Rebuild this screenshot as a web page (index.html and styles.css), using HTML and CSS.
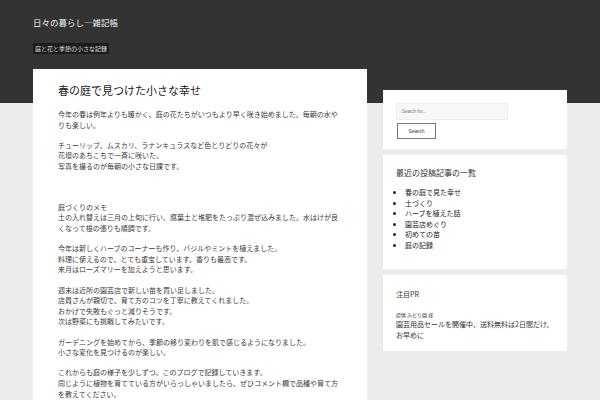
FILE: index.html
```html
<!DOCTYPE html>
<html lang="ja">
<head>
<meta charset="utf-8">
<title>日々の暮らし—雑記帳</title>
<link rel="stylesheet" href="styles.css">
</head>
<body>
<header class="site-header">
  <div class="site-title">日々の暮らし—雑記帳</div>
  <div class="site-tagline">庭と花と季節の小さな記録</div>
</header>
<div class="layout">
  <main class="content">
    <h1 class="entry-title">春の庭で見つけた小さな幸せ</h1>
    <p>今年の春は例年よりも暖かく、庭の花たちがいつもより早く咲き始めました。毎朝の水やりも楽しい。</p>
    <p>チューリップ、ムスカリ、ラナンキュラスなど色とりどりの花々が<br>花壇のあちこちで一斉に咲いた。<br>写真を撮るのが毎朝の小さな日課です。</p>
    <p>&nbsp;</p>
    <p>庭づくりのメモ<br>土の入れ替えは三月の上旬に行い、腐葉土と堆肥をたっぷり混ぜ込みました。水はけが良くなって根の張りも順調です。</p>
    <p>今年は新しくハーブのコーナーも作り、バジルやミントを植えました。<br>料理に使えるので、とても重宝しています。香りも最高です。<br>来月はローズマリーを加えようと思います。</p>
    <p>週末は近所の園芸店で新しい苗を買い足しました。<br>店員さんが親切で、育て方のコツを丁寧に教えてくれました。<br>おかげで失敗もぐっと減りそうです。<br>次は野菜にも挑戦してみたいです。</p>
    <p>ガーデニングを始めてから、季節の移り変わりを肌で感じるようになりました。<br>小さな変化を見つけるのが楽しい。</p>
    <p>これからも庭の様子を少しずつ、このブログで記録していきます。<br>同じように植物を育てている方がいらっしゃいましたら、ぜひコメント欄で品種や育て方を教えてください。<br>それでは、また次回の更新でお会いしましょう。</p>
  </main>
  <aside class="sidebar">
    <section class="widget search-widget">
      <div class="search-field">Search for...</div>
      <div class="search-button">Search</div>
    </section>
    <section class="widget">
      <h2 class="widget-title">最近の投稿記事の一覧</h2>
      <ul class="post-list">
        <li>春の庭で見た幸せ</li>
        <li>土づくり</li>
        <li>ハーブを植えた話</li>
        <li>園芸店めぐり</li>
        <li>初めての苗</li>
        <li>庭の記録</li>
      </ul>
    </section>
    <section class="widget pr-widget">
      <h2 class="pr-title">注目PR</h2>
      <div class="pr-sponsor">提供 みどり園 様</div>
      <p class="pr-text">園芸用品セールを開催中、送料無料は2日間だけ。お早めに</p>
    </section>
  </aside>
</div>
</body>
</html>
```
FILE: styles.css
```css
html, body {
  margin: 0;
  padding: 0;
}

body {
  background: linear-gradient(#333333 0, #333333 103px, #ececec 103px);
  font-family: "Noto Sans CJK JP", "Noto Sans", sans-serif;
  color: #3a3a3a;
  min-height: 400px;
}

.site-header {
  padding: 15px 33px 0;
}

.site-title {
  font-size: 8.5px;
  line-height: 14px;
  color: #f0f0f0;
}

.site-tagline {
  display: inline-block;
  margin-top: 14px;
  padding: 0 2px;
  font-size: 6px;
  line-height: 11px;
  color: #dddddd;
  background: #1c1c1c;
}

.layout {
  display: flex;
  align-items: flex-start;
  gap: 16px;
  padding: 0 34px 0 33px;
  margin-top: 13px;
}

.content {
  box-sizing: border-box;
  width: 334px;
  flex: none;
  background: #ffffff;
  padding: 14px 25px 20px;
}

.entry-title {
  margin: 0 0 12px;
  font-size: 11px;
  line-height: 14px;
  font-weight: 400;
  color: #222222;
}

.content p {
  margin: 0 0 9.8px;
  font-size: 7px;
  line-height: 10.55px;
}

.sidebar {
  width: 184px;
  flex: none;
  margin-top: 21px;
  display: flex;
  flex-direction: column;
  gap: 6px;
}

.widget {
  box-sizing: border-box;
  background: #ffffff;
  padding: 12px 13px 18.6px;
}

.search-widget {
  padding: 13px 13px 10px;
}

.search-field {
  box-sizing: border-box;
  width: 112px;
  height: 17px;
  background: #f7f7f7;
  border: 1px solid #efefef;
  padding: 0 5px;
  font-family: "Liberation Sans", sans-serif;
  font-size: 4.5px;
  line-height: 15px;
  color: #777777;
}

.search-button {
  box-sizing: border-box;
  width: 39px;
  height: 16px;
  margin: 3px 0 0 1px;
  border: 1px solid #777777;
  background: #ffffff;
  font-family: "Liberation Sans", sans-serif;
  font-size: 5px;
  line-height: 14px;
  text-align: center;
  color: #333333;
}

.widget-title {
  margin: 0 0 8.4px;
  font-size: 8px;
  line-height: 12px;
  font-weight: 400;
  color: #333333;
}

.post-list {
  margin: 0;
  padding-left: 9px;
  font-size: 7px;
  line-height: 10.5px;
  color: #222222;
}

.pr-widget {
  padding: 12.7px 13px 10px;
}

.pr-title {
  margin: 0 0 11px;
  font-size: 7px;
  line-height: 12px;
  font-weight: 400;
  color: #333333;
}

.pr-sponsor {
  font-size: 5px;
  line-height: 8px;
  color: #333333;
}

.pr-text {
  margin: 0;
  font-size: 7px;
  line-height: 11px;
  color: #333333;
}
```
